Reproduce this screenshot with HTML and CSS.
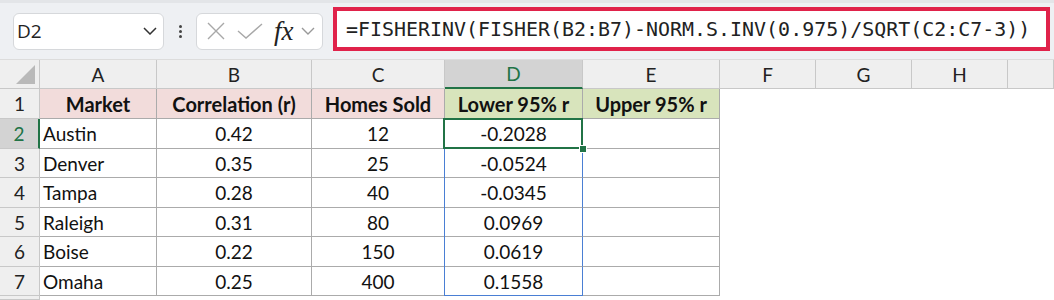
FILE: index.html
```html
<!DOCTYPE html>
<html lang="en">
<head>
    <meta charset="UTF-8">
    <meta name="viewport" content="width=device-width, initial-scale=1.0">
    <title>Fisher confidence interval</title>
    <link rel="stylesheet" href="styles.css">
</head>
<body>

<div class="toolbar">
    <div class="name-box">
        <span>D2</span>
        <svg class="chev" width="14" height="8" viewBox="0 0 14 8"><path d="M1 1l6 6 6-6" fill="none" stroke="#333" stroke-width="1.5"/></svg>
    </div>
    <div class="dots"><i></i><i></i><i></i></div>
    <div class="fx-box">
        <svg width="20" height="20" viewBox="0 0 20 20"><path d="M2 2l16 16M18 2L2 18" stroke="#a8a8a8" stroke-width="1.4"/></svg>
        <svg width="26" height="16" viewBox="0 0 26 16"><path d="M1 8l8 7L25 1" fill="none" stroke="#a8a8a8" stroke-width="1.4"/></svg>
        <span class="fx">fx</span>
        <svg class="chev" width="14" height="8" viewBox="0 0 14 8"><path d="M1 1l6 6 6-6" fill="none" stroke="#999" stroke-width="1.4"/></svg>
    </div>
    <div class="formula">=FISHERINV(FISHER(B2:B7)-NORM.S.INV(0.975)/SQRT(C2:C7-3))</div>
</div>

<div class="sheet">
    <div class="row head">
        <div class="corner"></div>
        <div class="ch">A</div>
        <div class="ch">B</div>
        <div class="ch">C</div>
        <div class="ch sel">D</div>
        <div class="ch">E</div>
        <div class="ch">F</div>
        <div class="ch">G</div>
        <div class="ch">H</div>
        <div class="ch"></div>
    </div>
    <div class="row h30">
        <div class="rh">1</div>
        <div class="c b pink">Market</div>
        <div class="c b pink">Correlation (r)</div>
        <div class="c b pink">Homes Sold</div>
        <div class="c b green">Lower 95% r</div>
        <div class="c b green">Upper 95% r</div>
    </div>
    <div class="row h30">
        <div class="rh sel">2</div>
        <div class="c l">Austin</div>
        <div class="c">0.42</div>
        <div class="c">12</div>
        <div class="c rng active">-0.2028</div>
        <div class="c"></div>
    </div>
    <div class="row h29">
        <div class="rh">3</div>
        <div class="c l">Denver</div>
        <div class="c">0.35</div>
        <div class="c">25</div>
        <div class="c rng">-0.0524</div>
        <div class="c"></div>
    </div>
    <div class="row h30">
        <div class="rh">4</div>
        <div class="c l">Tampa</div>
        <div class="c">0.28</div>
        <div class="c">40</div>
        <div class="c rng">-0.0345</div>
        <div class="c"></div>
    </div>
    <div class="row h29">
        <div class="rh">5</div>
        <div class="c l">Raleigh</div>
        <div class="c">0.31</div>
        <div class="c">80</div>
        <div class="c rng">0.0969</div>
        <div class="c"></div>
    </div>
    <div class="row h30">
        <div class="rh">6</div>
        <div class="c l">Boise</div>
        <div class="c">0.22</div>
        <div class="c">150</div>
        <div class="c rng">0.0619</div>
        <div class="c"></div>
    </div>
    <div class="row h29">
        <div class="rh">7</div>
        <div class="c l">Omaha</div>
        <div class="c">0.25</div>
        <div class="c">400</div>
        <div class="c rng last">0.1558</div>
        <div class="c"></div>
    </div>
    <div class="row tail">
        <div class="rh"></div>
    </div>
</div>

</body>
</html>
```

FILE: styles.css
```css
body {
    margin: 0;
    height: 300px;
    overflow: hidden;
    background-color: #fff;
    font-family: Lato, "Liberation Sans", sans-serif;
}

.toolbar {
    height: 60px;
    box-sizing: border-box;
    display: flex;
    align-items: center;
    padding: 0 4px 0 13px;
    background-color: #eef0f3;
    border-top: 3px solid #e3e5e8;
    border-bottom: 1px solid #dcdcdc;
}

.name-box,
.fx-box {
    height: 37px;
    box-sizing: border-box;
    display: flex;
    align-items: center;
    background-color: #fff;
    border: 1px solid #d6d8db;
    border-radius: 6px;
}

.name-box {
    width: 151px;
    padding: 0 6px 0 3px;
    justify-content: space-between;
    font-family: "Open Sans", sans-serif;
    font-size: 19px;
    color: #222;
}

.dots {
    width: 32px;
    display: flex;
    flex-direction: column;
    align-items: center;
    gap: 2px;
}

.dots i {
    width: 3px;
    height: 3px;
    background-color: #444;
    border-radius: 50%;
}

.fx-box {
    width: 127px;
    padding: 0 4px 0 9px;
    gap: 11px;
}

.fx-box .fx {
    font-family: "Liberation Serif", serif;
    font-style: italic;
    font-size: 27px;
    line-height: 1;
    color: #222;
    margin-right: -4px;
}

.formula {
    flex: 1;
    margin-left: 10px;
    height: 44px;
    margin-top: -4px;
    box-sizing: border-box;
    display: flex;
    align-items: center;
    padding-left: 9px;
    background-color: #fff;
    border: 4px solid #e0224a;
    font-family: "DejaVu Sans Mono", monospace;
    font-size: 19.95px;
    color: #222;
}

.sheet {
    font-size: 19px;
    color: #111;
}

.row {
    display: grid;
    grid-template-columns: 40px 117px 155px 133px 138px 137px 96px 96px 96px 1fr;
}

.head { height: 29px; }
.h30 { height: 30px; }
.h29 { height: 29px; }
.tail { height: 4px; }

.row > div {
    box-sizing: border-box;
    display: flex;
    align-items: center;
    justify-content: center;
}

.corner {
    position: relative;
    background-color: #efefef;
    border-right: 1px solid #c8c8c8;
    border-bottom: 1px solid #c8c8c8;
}

.corner::after {
    content: "";
    position: absolute;
    right: 4px;
    bottom: 4px;
    border-style: solid;
    border-width: 0 0 19px 19px;
    border-color: transparent transparent #b9b9b9 transparent;
}

.ch {
    background-color: #efefef;
    border-right: 1px solid #c8c8c8;
    border-bottom: 1px solid #c8c8c8;
    color: #222;
}

.ch.sel {
    background-color: #d3d3d3;
    color: #217346;
    border-bottom: 2px solid #217346;
}

.rh {
    background-color: #efefef;
    border-right: 1px solid #c8c8c8;
    border-bottom: 1px solid #c8c8c8;
    color: #222;
}

.rh.sel {
    background-color: #d3d3d3;
    color: #217346;
    border-right: 2px solid #217346;
}

.c {
    border-right: 1px solid #ababab;
    border-bottom: 1px solid #ababab;
}

.c.l {
    justify-content: flex-start;
    padding-left: 3px;
}

.c.b {
    font-weight: 700;
    font-size: 20px;
}

.pink { background-color: #f2dcdb; }
.green { background-color: #d8e4bc; }

.rng {
    border-right-color: #4a7fd4;
    box-shadow: -1px 0 0 #4a7fd4;
}

.rng.last { border-bottom-color: #4a7fd4; }

.active { position: relative; }

.active::before {
    content: "";
    position: absolute;
    top: -1px;
    left: -2px;
    right: -1px;
    bottom: -1px;
    border: 2px solid #217346;
}

.active::after {
    content: "";
    position: absolute;
    right: -5px;
    bottom: -5px;
    width: 6px;
    height: 6px;
    background-color: #217346;
    border: 1px solid #fff;
}
```
